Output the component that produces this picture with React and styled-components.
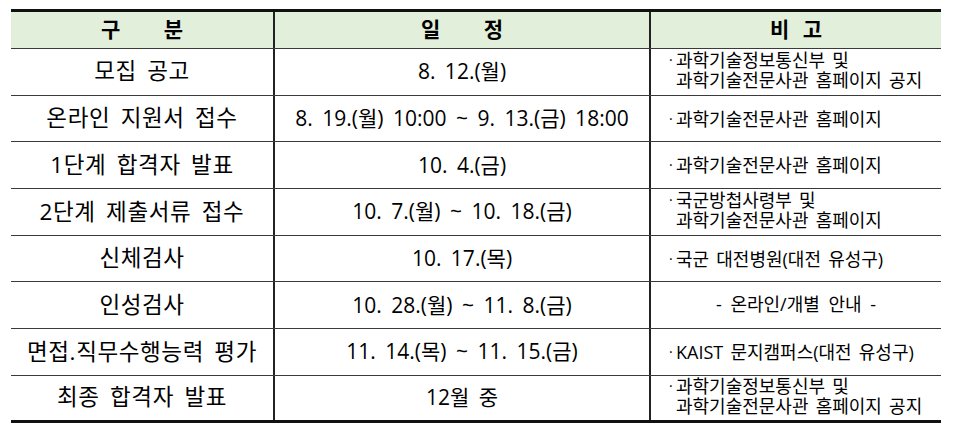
import React from 'react';
import styled, { createGlobalStyle } from 'styled-components';

const GlobalStyle = createGlobalStyle`
  html, body {
    margin: 0;
    padding: 0;
    background: #fff;
  }
  body {
    font-family: "Open Sans", "Noto Sans CJK KR", sans-serif;
    color: #000;
  }
`;

const Page = styled.div`
  padding: 9px 13px 6px 11px;
`;

const Table = styled.div`
  width: 930px;
  border-top: 3px solid #111;
  border-bottom: 3px solid #111;
`;

const Row = styled.div`
  display: grid;
  grid-template-columns: 262px 376px 292px;
  box-sizing: border-box;
  height: ${p => (p.$head ? '37px' : p.$last ? '44px' : '46.7px')};
  background: ${p => (p.$head ? '#e2efda' : 'transparent')};
  border-bottom: ${p => (p.$last ? 'none' : '1px solid #3a3a3a')};
`;

const Cell = styled.div`
  display: flex;
  align-items: center;
  justify-content: center;
  border-left: ${p => (p.$first ? 'none' : '2px solid #222')};
  font-size: ${p => p.$size || '21px'};
  letter-spacing: ${p => p.$track || '0'};
  word-spacing: 4px;
  line-height: 1.1;
  white-space: nowrap;
`;

const HeadCell = styled(Cell)`
  font-weight: 700;
  word-spacing: ${p => p.$gap || '3px'};
`;

const NoteCell = styled(Cell)`
  justify-content: flex-start;
  padding-left: 18px;
  font-size: 18px;
  word-spacing: 2.5px;
`;

const Note = styled.div`
  display: flex;
  align-items: flex-start;
  line-height: 20px;
  margin-top: ${p => (p.$two ? '-3px' : '0')};
`;

const Bullet = styled.span`
  width: 7px;
  flex: none;
  font-size: 14px;
`;

const Lines = styled.div`
  display: flex;
  flex-direction: column;
`;

const rows = [
  ['모집 공고', '8. 12.(월)', ['과학기술정보통신부 및', '과학기술전문사관 홈페이지 공지']],
  ['온라인 지원서 접수', '8. 19.(월) 10:00 ~ 9. 13.(금) 18:00', ['과학기술전문사관 홈페이지']],
  ['1단계 합격자 발표', '10. 4.(금)', ['과학기술전문사관 홈페이지']],
  ['2단계 제출서류 접수', '10. 7.(월) ~ 10. 18.(금)', ['국군방첩사령부 및', '과학기술전문사관 홈페이지']],
  ['신체검사', '10. 17.(목)', ['국군 대전병원(대전 유성구)']],
  ['인성검사', '10. 28.(월) ~ 11. 8.(금)', null],
  ['면접.직무수행능력 평가', '11. 14.(목) ~ 11. 15.(금)', ['KAIST 문지캠퍼스(대전 유성구)']],
  ['최종 합격자 발표', '12월 중', ['과학기술정보통신부 및', '과학기술전문사관 홈페이지 공지']],
];

export default function App() {
  return (
    <Page>
      <GlobalStyle />
      <Table>
        <Row $head>
          <HeadCell $first $gap="38px">구 분</HeadCell>
          <HeadCell $gap="38px">일 정</HeadCell>
          <HeadCell $gap="8px">비 고</HeadCell>
        </Row>
        {rows.map(([step, date, note], i) => (
          <Row key={step} $last={i === rows.length - 1}>
            <Cell $first $size="22.5px" $track="0.6px">{step}</Cell>
            <Cell>{date}</Cell>
            {note ? (
              <NoteCell>
                <Note $two={note.length > 1}>
                  <Bullet>·</Bullet>
                  <Lines>
                    {note.map(line => (
                      <span key={line}>{line}</span>
                    ))}
                  </Lines>
                </Note>
              </NoteCell>
            ) : (
              <Cell $size="18px">- 온라인/개별 안내 -</Cell>
            )}
          </Row>
        ))}
      </Table>
    </Page>
  );
}
